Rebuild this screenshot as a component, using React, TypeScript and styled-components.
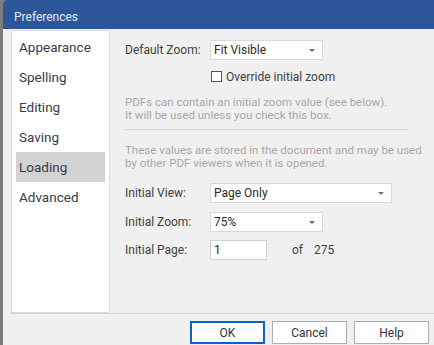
import styled, { createGlobalStyle } from 'styled-components';

const GlobalStyle = createGlobalStyle`
  html, body {
    margin: 0;
    padding: 0;
    background: #7d7d7d;
    overflow: hidden;
  }
  body {
    font-family: Roboto, "Liberation Sans", sans-serif;
  }
`;

const sections = ['Appearance', 'Spelling', 'Editing', 'Saving', 'Loading', 'Advanced'];

const Preferences = () => {
  return (
    <Window>
      <TitleBar>Preferences</TitleBar>
      <Body>
        <Sidebar>
          {sections.map(name => (
            <NavItem key={name} active={name === 'Loading'}>
              {name}
            </NavItem>
          ))}
        </Sidebar>
        <Panel>
          <FieldRow>
            <Label>Default Zoom:</Label>
            <Select width={113}>
              Fit Visible
              <Arrow />
            </Select>
          </FieldRow>
          <CheckRow>
            <Checkbox />
            <span>Override initial zoom</span>
          </CheckRow>
          <Note>
            PDFs can contain an initial zoom value (see below).
            <br />
            It will be used unless you check this box.
          </Note>
          <Divider />
          <Note>
            These values are stored in the document and may be used
            <br />
            by other PDF viewers when it is opened.
          </Note>
          <Fields>
            <FieldRow>
              <Label>Initial View:</Label>
              <Select width={182}>
                Page Only
                <Arrow />
              </Select>
            </FieldRow>
            <FieldRow>
              <Label>Initial Zoom:</Label>
              <Select width={113}>
                75%
                <Arrow />
              </Select>
            </FieldRow>
            <FieldRow>
              <Label>Initial Page:</Label>
              <PageInput>1</PageInput>
              <Of>of</Of>
              <PageCount>275</PageCount>
            </FieldRow>
          </Fields>
        </Panel>
      </Body>
      <Footer>
        <Button primary>OK</Button>
        <Button>Cancel</Button>
        <Button>Help</Button>
      </Footer>
    </Window>
  );
};

const Window = styled.div`
  margin-left: 3px;
  width: 445px;
  height: 360px;
  background: #f0f0f0;
  border-top-left-radius: 4px;
  overflow: hidden;
  display: flex;
  flex-direction: column;
`;

const TitleBar = styled.div`
  height: 29px;
  background: #2b579a;
  color: #e6e8f2;
  font-size: 12px;
  padding-left: 11px;
  display: flex;
  align-items: center;
  padding-top: 5px;
  box-sizing: border-box;
`;

const Body = styled.div`
  display: flex;
  padding: 1px 0 0 8px;
`;

const Sidebar = styled.div`
  width: 99px;
  height: 283px;
  box-sizing: border-box;
  background: #ffffff;
  border: 1px solid #dadada;
  padding: 1px 4px 0;
`;

const NavItem = styled.div<{ active?: boolean }>`
  height: 30px;
  line-height: 30px;
  padding-left: 3px;
  font-size: 13.5px;
  color: #3a3a4a;
  background: ${p => (p.active ? '#d3d3d3' : 'transparent')};
`;

const Panel = styled.div`
  flex: 1;
  padding: 10px 0 0 15px;
  font-size: 12px;
  color: #404040;
`;

const FieldRow = styled.div`
  display: flex;
  align-items: center;
  height: 20px;
`;

const Label = styled.div`
  width: 85px;
`;

const Select = styled.div<{ width: number }>`
  position: relative;
  width: ${p => p.width}px;
  height: 20px;
  box-sizing: border-box;
  background: #fff;
  border: 1px solid #d9d9d9;
  padding-left: 3px;
  display: flex;
  align-items: center;
  color: #2a2a2a;
`;

const Arrow = styled.span`
  position: absolute;
  right: 7px;
  top: 8px;
  border-left: 3px solid transparent;
  border-right: 3px solid transparent;
  border-top: 3px solid #707070;
`;

const CheckRow = styled.div`
  display: flex;
  align-items: center;
  gap: 4px;
  margin: 11px 0 0 86px;
  height: 11px;
`;

const Checkbox = styled.span`
  width: 11px;
  height: 11px;
  box-sizing: border-box;
  background: #fff;
  border: 1px solid #555;
`;

const Note = styled.div`
  color: #a8a8a8;
  font-size: 11.5px;
  line-height: 12.5px;
  margin-top: 14px;
`;

const Divider = styled.div`
  width: 283px;
  height: 1px;
  background: #d6d6d6;
  margin: 8px 0 1px;
`;

const Fields = styled.div`
  display: flex;
  flex-direction: column;
  gap: 8.5px;
  margin-top: 14px;
`;

const PageInput = styled.div`
  width: 57px;
  height: 20px;
  box-sizing: border-box;
  background: #fff;
  border: 1px solid #d0d0d0;
  padding-left: 3px;
  display: flex;
  align-items: center;
  color: #2a2a2a;
`;

const Of = styled.span`
  margin-left: 25px;
`;

const PageCount = styled.span`
  margin-left: 11px;
`;

const Footer = styled.div`
  margin: 0 0 0 7px;
  border-top: 1px solid #d4d4d4;
  padding: 7px 0 0 180px;
  display: flex;
  gap: 7px;
`;

const Button = styled.button<{ primary?: boolean }>`
  width: 75px;
  height: 23px;
  box-sizing: border-box;
  background: #fdfdfd;
  border: ${p => (p.primary ? '2px solid #0a64c8' : '1px solid #adadad')};
  font-family: Roboto, "Liberation Sans", sans-serif;
  font-size: 12px;
  color: #333;
  padding: 0;
`;

const App = () => (
  <>
    <GlobalStyle />
    <Preferences />
  </>
);

export default App;
